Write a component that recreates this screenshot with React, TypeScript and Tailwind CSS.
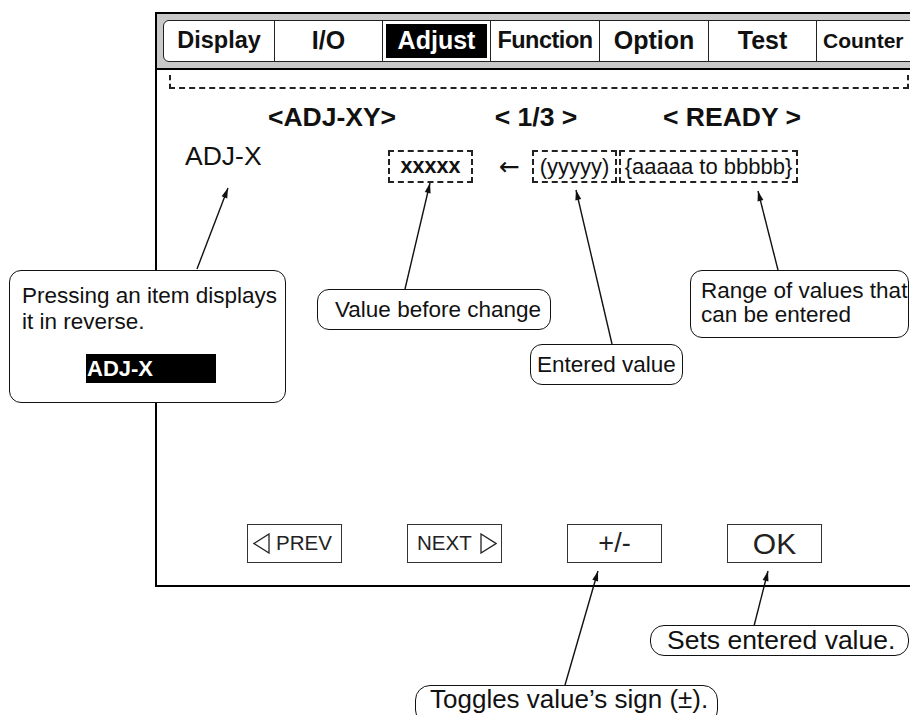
import React from 'react';

type Tab = { label: string; w: string; size: string; active?: boolean };

const tabs: Tab[] = [
  { label: 'Display', w: 'w-[110px] justify-center', size: 'text-[23.5px]' },
  { label: 'I/O', w: 'w-[108px] justify-center', size: 'text-[25px]' },
  { label: 'Adjust', w: 'w-[108px]', size: 'text-[25px]', active: true },
  { label: 'Function', w: 'w-[109px] justify-center', size: 'text-[23.5px] tracking-[-0.5px]' },
  { label: 'Option', w: 'w-[109px] justify-center', size: 'text-[25px]' },
  { label: 'Test', w: 'w-[108px] justify-center', size: 'text-[25px]' },
  { label: 'Counter', w: 'w-[108px] justify-start pl-[6px]', size: 'text-[21px]' },
];

// leader lines: tail (x1,y1) -> arrow tip (x2,y2)
const leaders = [
  { x1: 197, y1: 269, x2: 228, y2: 188 },
  { x1: 405, y1: 289, x2: 430, y2: 183 },
  { x1: 612, y1: 344, x2: 576, y2: 190 },
  { x1: 778, y1: 270, x2: 758, y2: 191 },
  { x1: 565, y1: 685, x2: 598, y2: 571 },
  { x1: 754, y1: 626, x2: 768, y2: 571 },
];

const arrowHead = (l: { x1: number; y1: number; x2: number; y2: number }) => {
  const dx = l.x2 - l.x1;
  const dy = l.y2 - l.y1;
  const len = Math.hypot(dx, dy);
  const ux = dx / len;
  const uy = dy / len;
  const bx = l.x2 - ux * 10;
  const by = l.y2 - uy * 10;
  const px = -uy * 3;
  const py = ux * 3;
  return `${l.x2},${l.y2} ${bx + px},${by + py} ${bx - px},${by - py}`;
};

const Leaders = () => (
  <svg className="absolute inset-0 pointer-events-none" width={910} height={715}>
    {leaders.map((l, i) => (
      <g key={i}>
        <line x1={l.x1} y1={l.y1} x2={l.x2} y2={l.y2} stroke="#111" strokeWidth={1.4} />
        <polygon points={arrowHead(l)} fill="#111" />
      </g>
    ))}
  </svg>
);

const LeftTri = () => (
  <svg width="17" height="21" viewBox="0 0 17 21">
    <polygon points="16,1 16,20 1,10.5" fill="none" stroke="#222" strokeWidth="1.3" />
  </svg>
);

const RightTri = () => (
  <svg width="17" height="21" viewBox="0 0 17 21">
    <polygon points="1,1 1,20 16,10.5" fill="none" stroke="#222" strokeWidth="1.3" />
  </svg>
);

export default function App() {
  return (
    <div className="relative w-[910px] h-[715px] overflow-hidden bg-white text-[#111] font-['Liberation_Sans',Arial,sans-serif]">
      {/* Screen */}
      <div className="absolute left-[155px] top-[12px] w-[780px] h-[575px] border-2 border-black flex flex-col">
        {/* Tab bar */}
        <div className="h-[56px] pt-[6px] pl-[6px] bg-[#c9c9c9] border-b-2 border-black">
          <div className="flex h-[42px] w-max bg-white border border-[#222] rounded-l-[6px]">
            {tabs.map((t, i) => (
              <div
                key={t.label}
                className={`${t.w} h-full font-bold ${t.size} ${i > 0 ? 'border-l border-[#222]' : ''} ${
                  t.active ? 'p-[3px]' : 'flex items-center'
                }`}
              >
                {t.active ? (
                  <div className="w-full h-full bg-black text-white flex items-center justify-center">{t.label}</div>
                ) : (
                  t.label
                )}
              </div>
            ))}
          </div>
        </div>

        {/* Message area */}
        <div className="ml-[12px] mt-[5px] w-[740px] h-[14px] border-x-2 border-b-2 border-dashed border-[#222]" />

        {/* Title row */}
        <div className="flex mt-[13px] h-[30px] leading-[30px] text-[26.5px] font-bold">
          <div className="ml-[77px] w-[196px] text-center">&lt;ADJ-XY&gt;</div>
          <div className="ml-[8px] w-[196px] text-center">&lt; 1/3 &gt;</div>
          <div className="w-[196px] text-center">&lt; READY &gt;</div>
        </div>

        {/* Value row */}
        <div className="flex items-start mt-[18px] h-[33px]">
          <div className="ml-[28px] w-[203px] -mt-[9px] text-[26.5px] leading-[30px]">ADJ-X</div>
          <div className="w-[85px] h-[33px] border-2 border-dashed border-[#222] flex items-center justify-center text-[21.5px] font-bold">
            xxxxx
          </div>
          <div className="w-[59px] pl-[26px] h-[33px] flex items-center text-[25px] font-['DejaVu_Sans',sans-serif]">
            ←
          </div>
          <div className="w-[85px] h-[33px] border-2 border-dashed border-[#222] flex items-center justify-center text-[22px]">
            (yyyyy)
          </div>
          <div className="ml-[2px] w-[179px] h-[33px] border-2 border-dashed border-[#222] flex items-center justify-center text-[22px]">
            {'{aaaaa to bbbbb}'}
          </div>
        </div>

        {/* Buttons */}
        <div className="mt-auto mb-[22px] flex pl-[90px] gap-[65px] text-[#222]">
          <div className="w-[95px] h-[39px] border border-[#333] flex items-center pl-[5px] gap-[6px] text-[20.5px]">
            <LeftTri />
            <span>PREV</span>
          </div>
          <div className="w-[95px] h-[39px] border border-[#333] flex items-center pl-[9px] gap-[8px] text-[20.5px]">
            <span>NEXT</span>
            <RightTri />
          </div>
          <div className="w-[95px] h-[39px] border border-[#333] flex items-center justify-center text-[27px]">+/-</div>
          <div className="w-[95px] h-[39px] border border-[#333] flex items-center justify-center text-[30px]">OK</div>
        </div>
      </div>

      <Leaders />

      {/* Callouts */}
      <div className="absolute left-[9px] top-[270px] w-[277px] h-[133px] bg-white border-[1.5px] border-[#111] rounded-[12px] pl-[12px] pt-[12px] text-[22.5px] leading-[26px]">
        <div>Pressing an item displays</div>
        <div>it in reverse.</div>
        <div className="mt-[19px] ml-[64px] w-[130px] h-[29px] bg-black text-white font-bold text-[22px] leading-[29px] pl-[1px]">
          ADJ-X
        </div>
      </div>

      <div className="absolute left-[317px] top-[289px] w-[234px] h-[41px] bg-white border-[1.5px] border-[#111] rounded-[12px] flex items-center pl-[17px] text-[22.5px]">
        Value before change
      </div>

      <div className="absolute left-[530px] top-[344px] w-[153px] h-[41px] bg-white border-[1.5px] border-[#111] rounded-[12px] flex items-center pl-[6px] text-[22.5px]">
        Entered value
      </div>

      <div className="absolute left-[690px] top-[270px] w-[219px] h-[68px] bg-white border-[1.5px] border-[#111] rounded-[12px] pl-[10px] pt-[8px] text-[22.5px] leading-[24px]">
        <div>Range of values that</div>
        <div>can be entered</div>
      </div>

      <div className="absolute left-[650px] top-[625px] w-[259px] h-[31px] bg-white border-[1.5px] border-[#111] rounded-[14px] flex items-center pl-[16px] text-[26.5px]">
        Sets entered value.
      </div>

      <div className="absolute left-[415px] top-[685px] w-[303px] h-[40px] bg-white border-[1.5px] border-[#111] rounded-[15px] pl-[14px] text-[26px] leading-[26px]">
        Toggles value’s sign (±).
      </div>
    </div>
  );
}
